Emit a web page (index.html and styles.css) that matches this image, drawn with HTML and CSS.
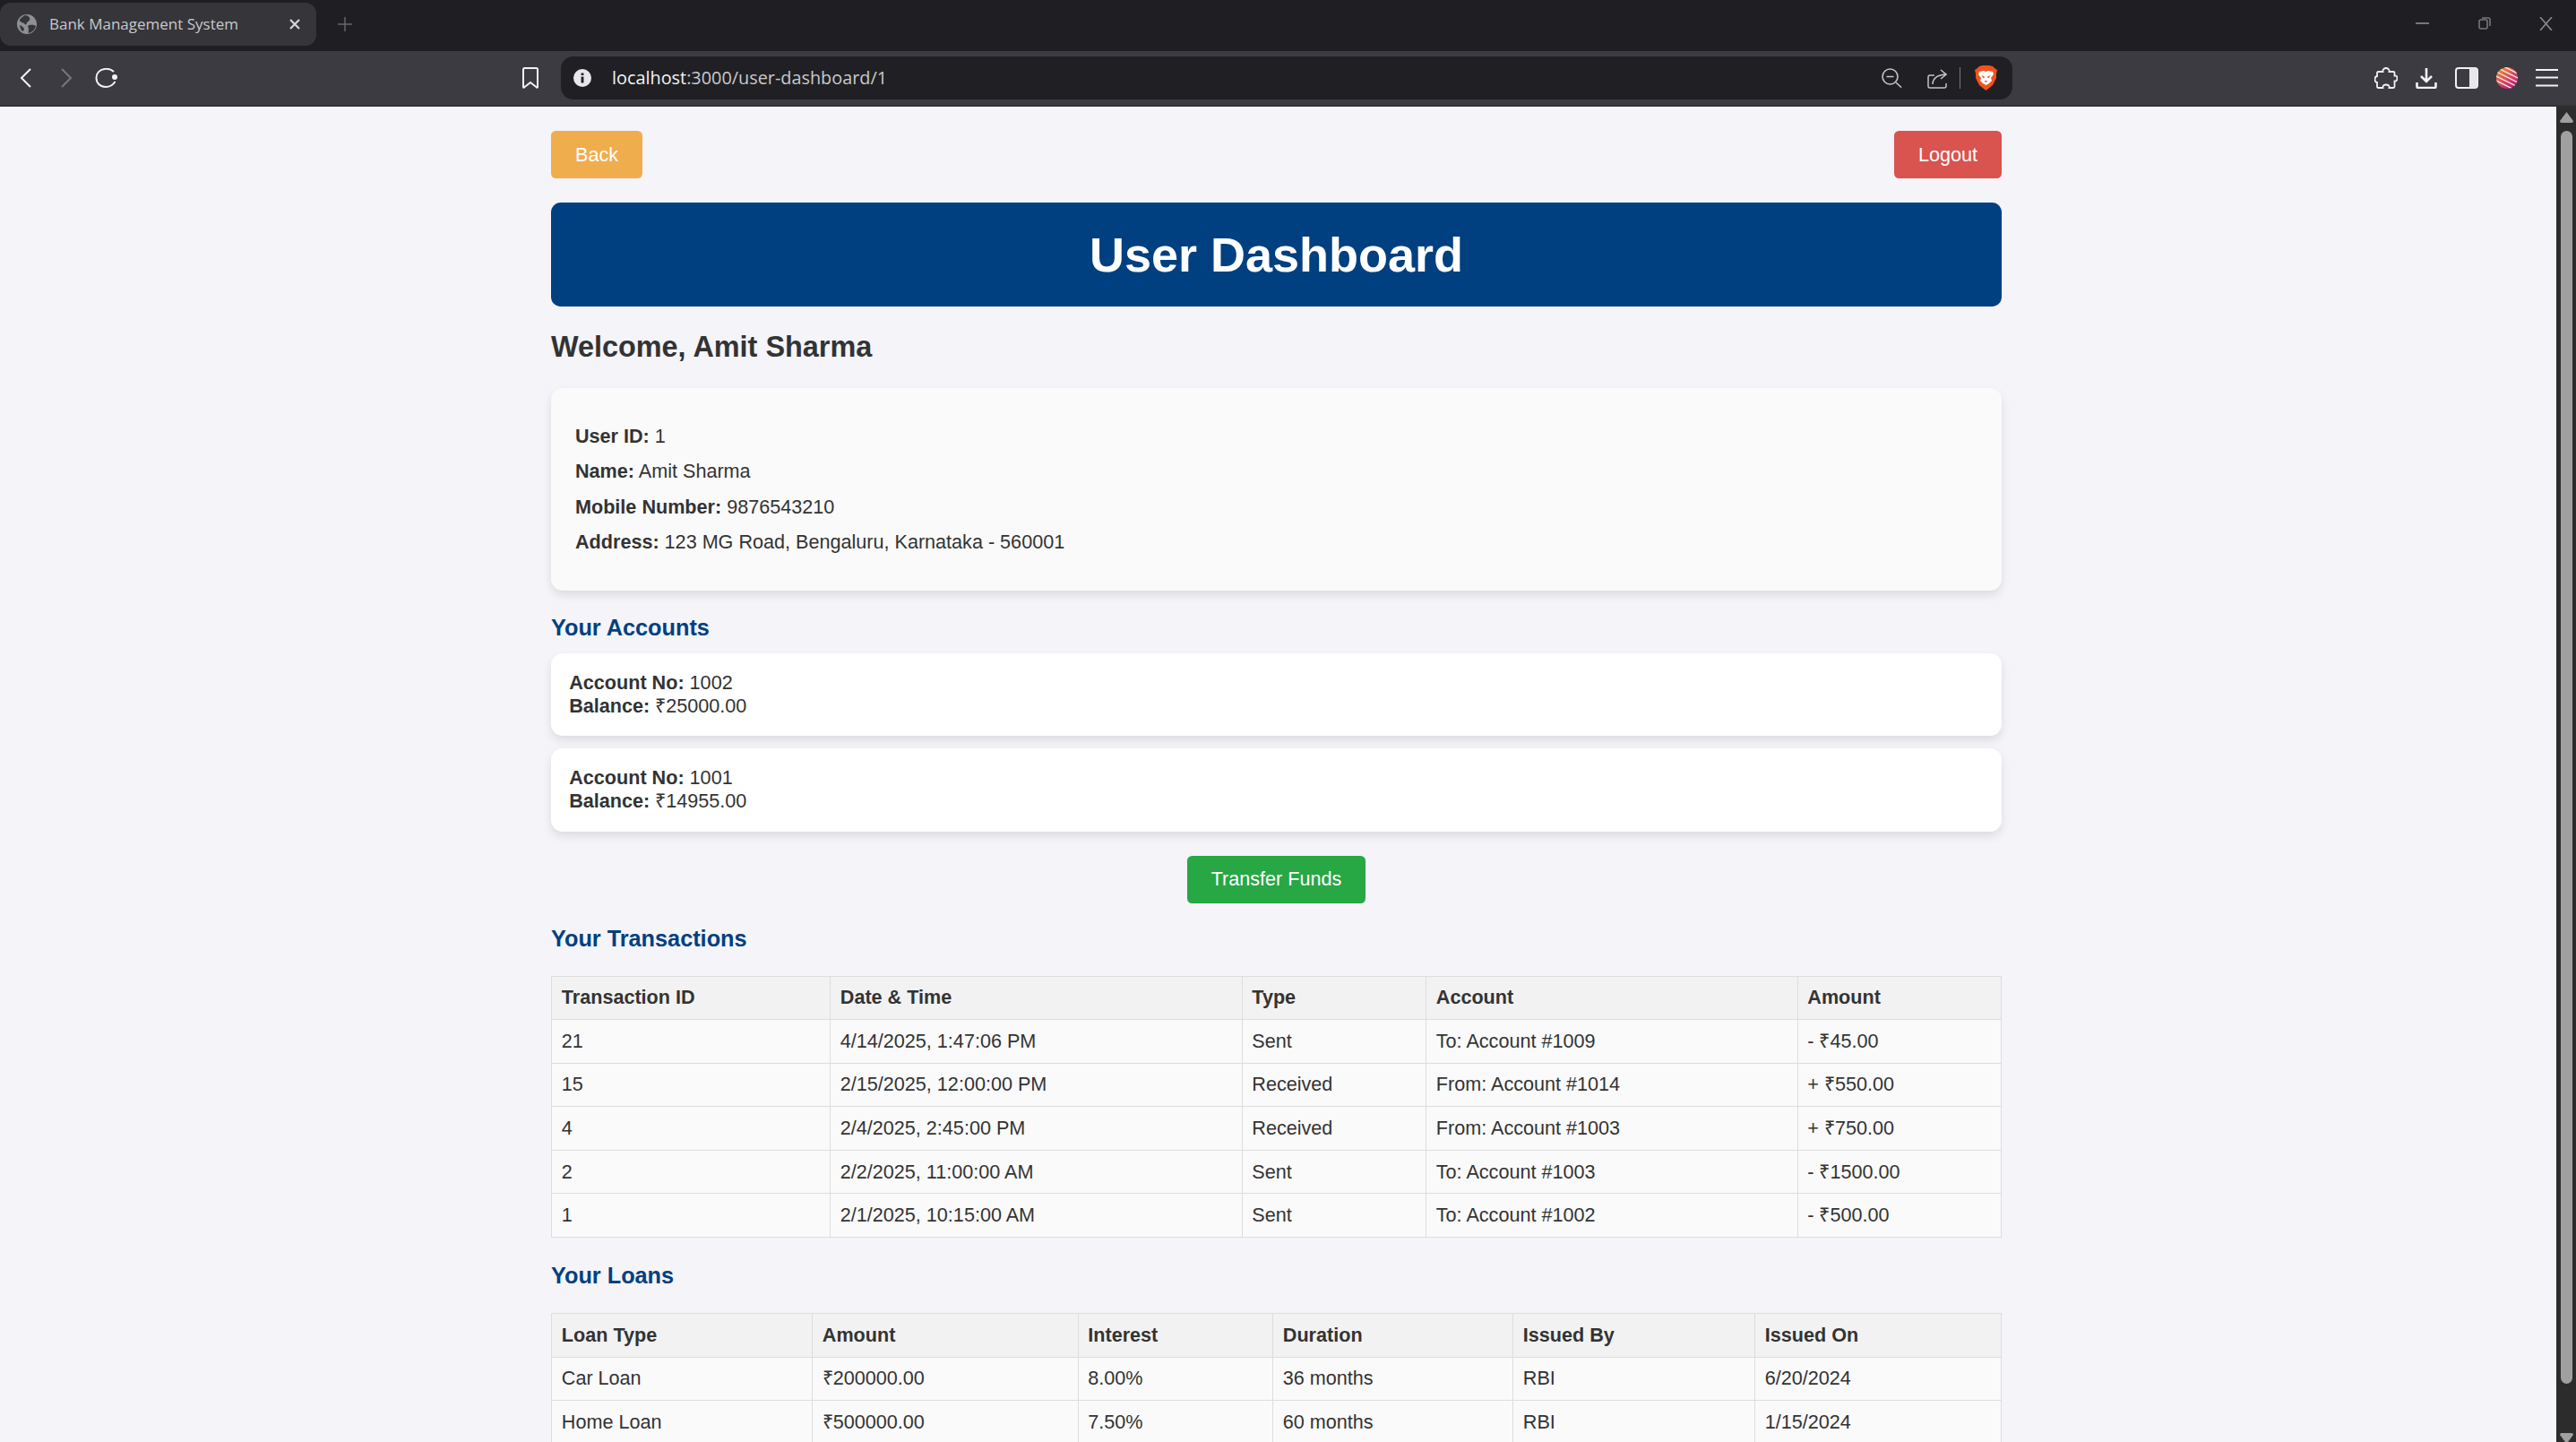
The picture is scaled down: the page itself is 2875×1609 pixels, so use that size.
FILE: index.html

```html
<!DOCTYPE html>
<html lang="en">
<head>
  <meta charset="utf-8">
  <title>Bank Management System</title>
  <link rel="stylesheet" href="styles.css">
</head>
<body>
  <!-- browser frame -->
  <div class="tabstrip">
    <div class="tab">
      <svg class="favicon" viewBox="0 0 22 22">
        <circle cx="11" cy="11" r="11" fill="#8f9094"/>
        <path d="M9 1 C6 3 4 4 3 6 C3 9 6 9 8 10 C9 12 11 12 11 9 C13 8 15 6 14 4 C13 2 11 1 9 1Z" fill="#35353a"/>
        <path d="M12 13 C15 11 19 12 21 13 C20 17 17 20 13 21 C12 19 14 17 12 13Z" fill="#35353a"/>
        <path d="M3 12 C6 13 8 15 8 17 C7 19 6 19 5 18 C4 16 3 14 3 12Z" fill="#35353a"/>
      </svg>
      <span class="tab-title">Bank Management System</span>
      <svg class="tab-close" viewBox="0 0 12 12"><path d="M1 1 L11 11 M11 1 L1 11"/></svg>
    </div>
    <svg class="new-tab" viewBox="0 0 16 16"><path d="M8 0 V16 M0 8 H16"/></svg>
    <div class="window-btns">
      <svg class="win-min" viewBox="0 0 15 2"><path d="M0 1 H15"/></svg>
      <svg class="win-restore" viewBox="0 0 14 14"><rect x="1" y="3" width="9" height="10" rx="2"/><path d="M4 1 H11 Q13 1 13 3 V10"/></svg>
      <svg class="win-close" viewBox="0 0 15 15"><path d="M1 0 L14 15 M14 0 L1 15"/></svg>
    </div>
  </div>

  <div class="toolbar">
    <svg class="ic-back" viewBox="0 0 13 22"><path d="M12 1 L2 11 L12 21"/></svg>
    <svg class="ic-forward" viewBox="0 0 13 22"><path d="M1 1 L11 11 L1 21"/></svg>
    <svg class="ic-reload" viewBox="0 0 26 22">
      <path d="M21 4 C18 1 14 0.5 10.5 1 C5 2 1.5 6 1.5 11 C1.5 17 6 21 12 21 C16 21 20 19 22.500 15"/>
      <circle cx="22" cy="10" r="3" class="dot"/>
    </svg>
    <svg class="ic-bookmark" viewBox="0 0 18 24"><path d="M2.500 1 H15.500 Q17 1 17 2.500 V22 Q17 23 16 22.500 L9 17 L2 22.500 Q1 23 1 22 V2.500 Q1 1 2.500 1Z"/></svg>

    <div class="addressbar">
      <svg class="ic-info" viewBox="0 0 20 20">
        <circle cx="10" cy="10" r="10" fill="#e8e8ea"/>
        <rect x="8.600" y="8.500" width="2.800" height="7" fill="#202024"/>
        <rect x="8.600" y="4.500" width="2.800" height="2.500" fill="#202024"/>
      </svg>
      <span class="url"><span class="url-host">localhost</span>:3000/user-dashboard/1</span>
      <div class="address-right">
        <svg class="ic-zoom" viewBox="0 0 23 22">
          <circle cx="9.500" cy="9.500" r="8.500"/><path d="M5.500 9.500 H13.500 M16 16 L22 21.500"/>
        </svg>
        <svg class="ic-share" viewBox="0 0 22 23">
          <path d="M8 8 H3 Q1 8 1 10 V20 Q1 22 3 22 H19 Q21 22 21 20 V17"/>
          <path d="M6 18 C6 12 10 8 20 7 M15 2 L21 7 L15 12"/>
        </svg>
        <span class="addr-divider"></span>
        <svg class="ic-brave" viewBox="0 0 25 28">
          <path d="M5 1 L9 0 H16 L20 1 L22 3 L25 5 L24 9 L24 14 L20 22 L12.500 28 L5 22 L1 14 L1 9 L0 5 L3 3Z" fill="#f1521f"/>
          <path d="M5 7 L10 6 L12.500 7 L15 6 L20 7 L21 10 L18 14 L19 17 L16 20 L12.500 22 L9 20 L6 17 L7 14 L4 10Z" fill="#fff"/>
          <path d="M7 11 L11 12.500 L10 14.500Z M18 11 L14 12.500 L15 14.500Z M10.500 17 H14.500 L12.500 19Z" fill="#f1521f"/>
        </svg>
      </div>
    </div>

    <svg class="ic-puzzle" viewBox="0 0 26 24">
      <path d="M9.500 5 C9 2.500 11 1 13 1 C15 1 17 2.500 16.500 5 H21 Q22.500 5 22.500 6.500 V9.500 C25 9 25.500 11 25.500 12.500 C25.500 14 24.500 16 22.500 15.500 V21.500 Q22.500 23 21 23 H16.500 C17 20.500 15 19.500 13 19.500 C11 19.500 9 20.500 9.500 23 H4.500 Q3 23 3 21.500 V17 C1 17 0.500 15 0.500 13.500 C0.500 12 1 10 3 10 V6.500 Q3 5 4.500 5Z"/>
    </svg>
    <svg class="ic-download" viewBox="0 0 24 24">
      <path d="M12 1 V15 M6 10 L12 16 L18 10" class="thick"/>
      <path d="M1.500 17 V21.500 Q1.500 23 3 23 H21 Q22.500 23 22.500 21.500 V17" class="thick"/>
    </svg>
    <svg class="ic-sidebar" viewBox="0 0 26 24">
      <rect x="1" y="1" width="24" height="22" rx="3"/>
      <path d="M16 1 H22 Q25 1 25 4 V20 Q25 23 22 23 H16Z" class="solid"/>
    </svg>
    <svg class="ic-avatar" viewBox="0 0 24 24">
      <defs>
        <linearGradient id="avatarFill" x1="0" y1="0" x2="0.700" y2="1">
          <stop offset="0" stop-color="#f59a23"/>
          <stop offset="1" stop-color="#c4127f"/>
        </linearGradient>
        <clipPath id="avatarClip"><circle cx="12" cy="12" r="12"/></clipPath>
      </defs>
      <g clip-path="url(#avatarClip)">
        <rect width="24" height="24" fill="url(#avatarFill)"/>
        <path d="M-2 -6 L26 8 M-2 -1 L26 13 M-2 4 L26 18 M-2 9 L26 23 M-2 14 L26 28" stroke="#f9e6e6" stroke-width="1.500"/>
      </g>
    </svg>
    <svg class="ic-menu" viewBox="0 0 25 20"><path d="M0 1 H25 M0 9.500 H25 M0 18.500 H25"/></svg>
  </div>

  <!-- page -->
  <div class="viewport">
    <main class="page">
      <div class="container">
        <div class="top-actions">
          <button class="btn btn-back">Back</button>
          <button class="btn btn-logout">Logout</button>
        </div>

        <header class="dash-header"><h1>User Dashboard</h1></header>

        <h2 class="welcome">Welcome, Amit Sharma</h2>

        <section class="user-card">
          <p><b>User ID:</b> 1</p>
          <p><b>Name:</b> Amit Sharma</p>
          <p><b>Mobile Number:</b> 9876543210</p>
          <p><b>Address:</b> 123 MG Road, Bengaluru, Karnataka - 560001</p>
        </section>

        <h3 class="section-title">Your Accounts</h3>
        <div class="account-card"><b>Account No:</b> 1002<br><b>Balance:</b> ₹25000.00</div>
        <div class="account-card"><b>Account No:</b> 1001<br><b>Balance:</b> ₹14955.00</div>

        <div class="center-row"><button class="btn btn-transfer">Transfer Funds</button></div>

        <h3 class="section-title tight">Your Transactions</h3>
        <table class="data-table tx-table">
          <thead>
            <tr><th>Transaction ID</th><th>Date &amp; Time</th><th>Type</th><th>Account</th><th>Amount</th></tr>
          </thead>
          <tbody>
            <tr><td>21</td><td>4/14/2025, 1:47:06 PM</td><td>Sent</td><td>To: Account #1009</td><td>- ₹45.00</td></tr>
            <tr><td>15</td><td>2/15/2025, 12:00:00 PM</td><td>Received</td><td>From: Account #1014</td><td>+ ₹550.00</td></tr>
            <tr><td>4</td><td>2/4/2025, 2:45:00 PM</td><td>Received</td><td>From: Account #1003</td><td>+ ₹750.00</td></tr>
            <tr><td>2</td><td>2/2/2025, 11:00:00 AM</td><td>Sent</td><td>To: Account #1003</td><td>- ₹1500.00</td></tr>
            <tr><td>1</td><td>2/1/2025, 10:15:00 AM</td><td>Sent</td><td>To: Account #1002</td><td>- ₹500.00</td></tr>
          </tbody>
        </table>

        <h3 class="section-title loans">Your Loans</h3>
        <table class="data-table loan-table">
          <thead>
            <tr><th>Loan Type</th><th>Amount</th><th>Interest</th><th>Duration</th><th>Issued By</th><th>Issued On</th></tr>
          </thead>
          <tbody>
            <tr><td>Car Loan</td><td>₹200000.00</td><td>8.00%</td><td>36 months</td><td>RBI</td><td>6/20/2024</td></tr>
            <tr><td>Home Loan</td><td>₹500000.00</td><td>7.50%</td><td>60 months</td><td>RBI</td><td>1/15/2024</td></tr>
          </tbody>
        </table>
      </div>
    </main>

    <div class="scrollbar">
      <svg class="scroll-arrow" viewBox="0 0 15 12"><path d="M7.500 0 L15 10 Q15 12 13 12 H2 Q0 12 0 10Z"/></svg>
      <div class="scroll-thumb"></div>
      <svg class="scroll-arrow scroll-down" viewBox="0 0 15 12"><path d="M7.500 12 L15 2 Q15 0 13 0 H2 Q0 0 0 2Z"/></svg>
    </div>
  </div>
</body>
</html>
```

FILE: styles.css

```css
html,body{margin:0;height:100%;overflow:hidden}
body{display:flex;flex-direction:column;height:100vh;background:#f4f4f9;
  font-family:"Liberation Sans",Arial,sans-serif;font-size:21.6px;line-height:26px;color:#333}
svg{display:block;flex:none;fill:none}

/* browser frame */
.tabstrip{display:flex;align-items:flex-start;height:57px;flex:none;background:#1f1f23}
.tab{display:flex;align-items:center;width:353px;height:48px;margin-top:3px;background:#35353a;border-radius:12px;box-sizing:border-box;padding-left:19px}
.favicon{width:22px;height:22px}
.tab-title{margin-left:14px;font:17px/22px "Open Sans",sans-serif;color:#c8c8cb;white-space:nowrap}
.tab-close{width:12px;height:12px;margin-left:auto;margin-right:18px;stroke:#d6d6d8;stroke-width:2.200}
.new-tab{width:16px;height:16px;margin:19px 0 0 24px;stroke:#67676b;stroke-width:1.500}
.window-btns{display:flex;align-items:center;margin-left:auto;height:52px}
.win-min{width:15px;height:2px;stroke:#77777b;stroke-width:2}
.win-restore{width:14px;height:14px;margin-left:55px;stroke:#77777b;stroke-width:1.600}
.win-close{width:15px;height:15px;margin-left:54px;margin-right:26px;stroke:#8a8a8e;stroke-width:1.600}

.toolbar{display:flex;align-items:center;height:60px;flex:none;background:#3c3b41;border-bottom:2px solid #323236;box-sizing:content-box}
.toolbar svg{stroke:#f2f2f3;stroke-width:2}
.toolbar .ic-back{width:13px;height:22px;margin-left:22px}
.toolbar .ic-forward{width:13px;height:22px;margin-left:33px;stroke:#77777b}
.toolbar .ic-reload{width:26px;height:22px;margin-left:25px}
.ic-reload .dot{fill:#f2f2f3;stroke:none}
.toolbar .ic-bookmark{width:18px;height:24px;margin-left:451px}
.addressbar{display:flex;align-items:center;width:1620px;height:48px;margin-left:25px;background:#202024;border-radius:14px;box-sizing:border-box;padding:0 17px 0 14px}
.toolbar .ic-info{width:20px;height:20px;stroke:none}
.url{margin-left:23px;font:19.85px/26px "Open Sans",sans-serif;color:#c9c9cc;white-space:nowrap}
.url-host{color:#f4f4f5}
.address-right{display:flex;align-items:center;margin-left:auto}
.toolbar .ic-zoom{width:23px;height:22px;stroke:#c4c4c7;stroke-width:1.600}
.toolbar .ic-share{width:22px;height:23px;margin-left:28px;stroke:#c4c4c7;stroke-width:1.500}
.addr-divider{width:1px;height:24px;margin-left:14px;background:#77777b}
.toolbar .ic-brave{width:25px;height:28px;margin-left:16px;stroke:none}
.toolbar .ic-puzzle{width:26px;height:24px;margin-left:404px;stroke-width:1.800}
.toolbar .ic-download{width:24px;height:24px;margin-left:20px}
.ic-download .thick{stroke-width:2.600}
.toolbar .ic-sidebar{width:26px;height:24px;margin-left:20px}
.ic-sidebar .solid{fill:#e8e8ea;stroke:none}
.toolbar .ic-avatar{width:24px;height:24px;margin-left:20px;stroke:none}
.toolbar .ic-menu{width:25px;height:20px;margin-left:20px;stroke-width:2.200}

/* page area */
.viewport{display:flex;flex:1;min-height:0}
.page{flex:1;min-width:0;overflow:hidden;box-sizing:border-box;padding:27px 0 0 615px}
.container{width:1619px}
.scrollbar{width:22px;flex:none;background:#2c2c2c;box-sizing:border-box;padding:6px 0 0 4px}
.scroll-arrow{width:15px;height:12px}
.scroll-arrow path{fill:#a0a0a0}
.scroll-thumb{width:13px;height:1398px;margin:9px 0 0 1px;background:#a0a0a0;border-radius:7px}
.scroll-down{margin-top:55px}

.top-actions{display:flex;justify-content:space-between}
.btn{border:0;border-radius:5.400px;padding:13.500px 27px;font:21.6px/26px "Liberation Sans",Arial,sans-serif;color:#fff}
.btn-back{background:#f0ad4e}
.btn-logout{background:#d9534f}
.btn-transfer{background:#28a745}

.dash-header{margin-top:27px;padding:27px;background:#004080;border-radius:10.800px;text-align:center}
.dash-header h1{margin:0;font-size:54px;line-height:62px;color:#fff}
.welcome{margin:27px 0 0;font-size:32.4px;line-height:36px;color:#333}

.user-card{margin-top:28px;padding:27px;background:#fafafa;border-radius:13px;box-shadow:0 5px 11px rgba(0,0,0,.1)}
.user-card p{margin:13.500px 0}

.section-title{margin:27px 0 15px;font-size:25.27px;line-height:28px;color:#004080}
.section-title.tight{margin-top:25px}
.section-title.loans{margin-top:28px}

.account-card{margin-bottom:14px;padding:20.250px;background:#fff;border-radius:13px;box-shadow:0 5px 11px rgba(0,0,0,.1)}
.center-row{display:flex;justify-content:center;margin-top:27px}

.data-table{width:1619px;table-layout:fixed;border-collapse:collapse}
.data-table th,.data-table td{box-sizing:border-box;padding:10.800px;border:1px solid #ddd;text-align:left;background:#fafafa;white-space:nowrap}
.data-table th{background:#f2f2f2}
.tx-table{margin-top:28px}
.tx-table th:nth-child(1){width:311px}
.tx-table th:nth-child(2){width:459.500px}
.tx-table th:nth-child(3){width:205.500px}
.tx-table th:nth-child(4){width:414.500px}
.loan-table{margin-top:28px}
.loan-table th:nth-child(1){width:291px}
.loan-table th:nth-child(2){width:296.500px}
.loan-table th:nth-child(3){width:217.500px}
.loan-table th:nth-child(4){width:268px}
.loan-table th:nth-child(5){width:270px}
```
